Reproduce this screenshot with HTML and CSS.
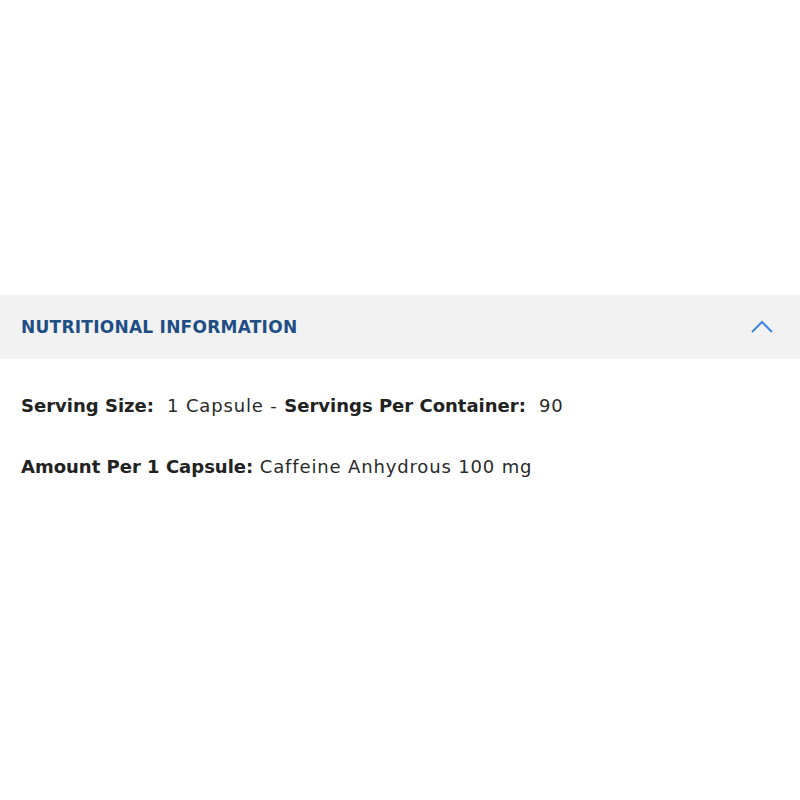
FILE: index.html
```html
<!DOCTYPE html>
<html lang="en">
<head>
    <meta charset="UTF-8">
    <meta name="viewport" content="width=device-width, initial-scale=1.0">
    <title>Nutritional Information</title>
    <link rel="stylesheet" href="styles.css">
</head>
<body>
    <section class="accordion">
        <div class="accordion-header">
            <h3>NUTRITIONAL INFORMATION</h3>
            <svg class="chevron" width="24" height="14" viewBox="0 0 24 14">
                <path d="M2 12 L12 2 L22 12" fill="none" stroke="#3d86e8" stroke-width="2"/>
            </svg>
        </div>
        <div class="accordion-body">
            <p><b>Serving Size:</b>&nbsp; 1 Capsule - <b>Servings Per Container:</b>&nbsp; 90</p>
            <p><b>Amount Per 1 Capsule:</b> Caffeine Anhydrous 100 mg</p>
        </div>
    </section>
</body>
</html>
```

FILE: styles.css
```css
/* Basic styling */
body {
    font-family: "DejaVu Sans", sans-serif;
    margin: 0;
    padding: 0;
    background: #fff;
}
.accordion {
    margin-top: 295px;
}
.accordion-header {
    display: flex;
    align-items: center;
    justify-content: space-between;
    height: 64px;
    padding: 0 26px 0 21px;
    background-color: #f2f2f2;
}
.accordion-header h3 {
    margin: 0;
    font-size: 17px;
    font-weight: 700;
    letter-spacing: 0.25px;
    color: #1f4e85;
}
.accordion-body {
    padding: 34px 21px;
}
.accordion-body p {
    margin: 0 0 36px;
    font-size: 18px;
    line-height: 25px;
    letter-spacing: 0.85px;
    color: #2a2a2a;
}
.accordion-body b {
    font-weight: 700;
    letter-spacing: 0;
    color: #222;
}
```
